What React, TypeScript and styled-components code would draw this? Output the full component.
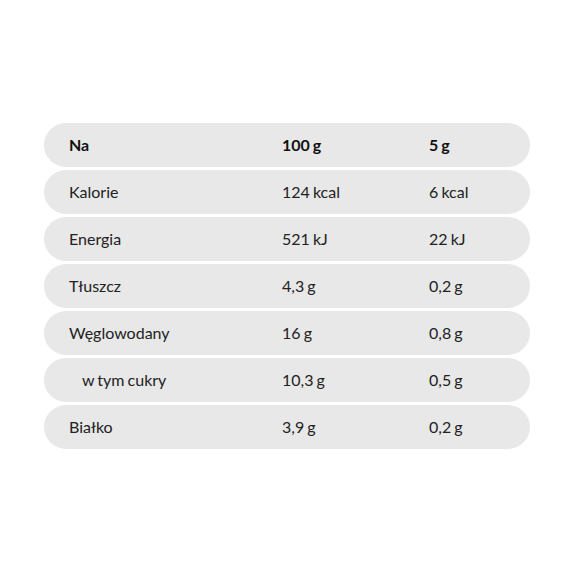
import React from 'react';
import styled, { createGlobalStyle } from 'styled-components';

const GlobalStyle = createGlobalStyle`
  html, body {
    margin: 0;
    padding: 0;
    background: #ffffff;
  }
  body {
    font-family: Lato, "Open Sans", sans-serif;
  }
`;

const Page = styled.div`
  width: 580px;
  height: 580px;
  box-sizing: border-box;
  padding: 123px 50px 0 44px;
`;

const Table = styled.div`
  display: flex;
  flex-direction: column;
  gap: 3px;
  width: 486px;
`;

const Row = styled.div<{ $head?: boolean }>`
  display: grid;
  grid-template-columns: 213px 147px 1fr;
  align-items: center;
  box-sizing: border-box;
  height: 44px;
  padding: 0 0 2px 25px;
  border-radius: 22px;
  background: #e8e8e8;
  font-size: 16px;
  font-weight: ${p => (p.$head ? 700 : 400)};
  color: ${p => (p.$head ? '#111' : '#222')};
`;

const Cell = styled.span<{ $indent?: boolean }>`
  padding-left: ${p => (p.$indent ? '13px' : '0')};
  white-space: nowrap;
  word-spacing: -1px;
`;

const rows = [
  { name: 'Kalorie', a: '124 kcal', b: '6 kcal' },
  { name: 'Energia', a: '521 kJ', b: '22 kJ' },
  { name: 'Tłuszcz', a: '4,3 g', b: '0,2 g' },
  { name: 'Węglowodany', a: '16 g', b: '0,8 g' },
  { name: 'w tym cukry', a: '10,3 g', b: '0,5 g', indent: true },
  { name: 'Białko', a: '3,9 g', b: '0,2 g' },
];

const App = () => {
  return (
    <Page>
      <GlobalStyle />
      <Table>
        <Row $head>
          <Cell>Na</Cell>
          <Cell>100 g</Cell>
          <Cell>5 g</Cell>
        </Row>
        {rows.map(r => (
          <Row key={r.name}>
            <Cell $indent={r.indent}>{r.name}</Cell>
            <Cell>{r.a}</Cell>
            <Cell>{r.b}</Cell>
          </Row>
        ))}
      </Table>
    </Page>
  );
};

export default App;
